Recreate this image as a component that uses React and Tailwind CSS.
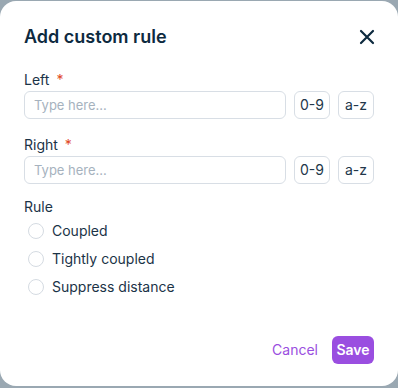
import React from 'react';

const FIELDS = ['Left', 'Right'];
const RULES = ['Coupled', 'Tightly coupled', 'Suppress distance'];

function Field({ label }) {
  return (
    <div className="flex flex-col">
      <div className="flex h-5 items-center text-sm text-[#1b3347]">
        {label}
        <span className="ml-[7px] text-[#e0481f]">*</span>
      </div>
      <div className="mt-px flex items-center gap-2">
        <input
          placeholder="Type here..."
          className="h-7 flex-1 rounded-md border border-[#d8dee5] px-[9px] text-[13px] text-[#1b3347] placeholder:text-[#a6b2be] outline-none"
        />
        <button className="h-7 w-9 rounded-md border border-[#d8dee5] text-sm text-[#22374a]">0-9</button>
        <button className="h-7 w-9 rounded-md border border-[#d8dee5] text-sm text-[#22374a]">a-z</button>
      </div>
    </div>
  );
}

export default function App() {
  return (
    <div className="h-[388px] w-[398px] bg-[#9aa8b2] pt-px" style={{ fontFamily: 'Inter, "Noto Sans", sans-serif' }}>
      <div className="flex h-[385px] flex-col rounded-2xl bg-white px-6 pt-[22px]">
        {/* Header */}
        <div className="flex h-7 items-center justify-between">
          <h1 className="text-lg font-semibold text-[#0d2a3f]">Add custom rule</h1>
          <svg width="16" height="16" viewBox="0 0 16 16" className="mr-[-1px]">
            <path d="M2 2L14 14M14 2L2 14" stroke="#0d2a3f" strokeWidth="2.2" strokeLinecap="round" />
          </svg>
        </div>

        <div className="mt-[19px] flex flex-col gap-4">
          {FIELDS.map((f) => (
            <Field key={f} label={f} />
          ))}
        </div>

        {/* Rule */}
        <div className="mt-[13px] flex h-5 items-center text-sm text-[#1b3347]">Rule</div>
        <div className="flex flex-col">
          {RULES.map((r) => (
            <label key={r} className="flex h-7 items-center gap-[8px] pl-1 text-sm text-[#1b3347]">
              <span className="size-4 rounded-full border border-[#d5dbe2] bg-white" />
              {r}
            </label>
          ))}
        </div>

        {/* Footer */}
        <div className="mt-auto mb-[22px] flex items-center justify-end gap-[14px]">
          <button className="text-sm text-[#9a4ee0]">Cancel</button>
          <button className="flex h-7 w-[42px] items-center justify-center rounded-md bg-[#9a4ee0] text-sm font-semibold text-white">Save</button>
        </div>
      </div>
    </div>
  );
}
